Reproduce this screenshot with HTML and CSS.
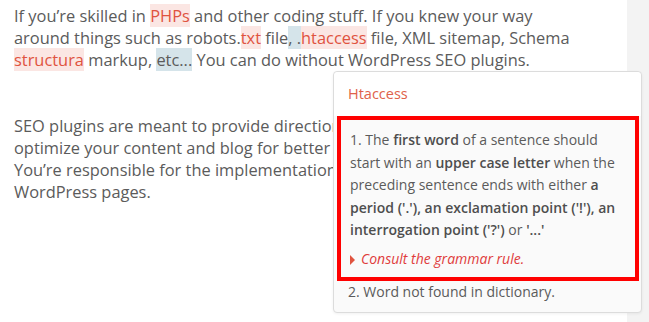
FILE: index.html
```html
<!DOCTYPE html>
<html lang="en">
<head>
  <meta charset="UTF-8" />
  <title>Grammar check</title>
  <link rel="stylesheet" href="styles.css">
</head>
<body>
  <div class="page">
    <p>If you’re skilled in <span class="err">PHPs</span> and other coding stuff. If you knew your way<br>
    around things such as robots.<span class="err">txt</span> file<span class="warn">, .</span><span class="err">htaccess</span> file, XML sitemap, Schema<br>
    <span class="err">structura</span> markup, <span class="warn">etc...</span> You can do without WordPress SEO plugins.</p>
    <p class="second">SEO plugins are meant to provide direction on how to<br>
    optimize your content and blog for better ranking.<br>
    You’re responsible for the implementation on your<br>
    WordPress pages.</p>
  </div>

  <div class="popup">
    <div class="popup-title">Htaccess</div>
    <div class="popup-body">
      <div class="rule selected">
        <p>1. The <b>first word</b> of a sentence should start with an <b>upper case letter</b> when the preceding sentence ends with either <b>a period ('.'), an exclamation point ('!'), an interrogation point ('?')</b> or <b>'...'</b></p>
        <div class="consult"><span class="arrow"></span>Consult the grammar rule.</div>
      </div>
      <div class="rule">
        <p>2. Word not found in dictionary.</p>
      </div>
    </div>
  </div>
</body>
</html>
```

FILE: styles.css
```css
body {
  margin: 0;
  background-color: #f3f3f3;
  font-family: 'Open Sans', sans-serif;
  color: #5b5b5b;
  height: 322px;
  overflow: hidden;
}

.page {
  width: 627px;
  height: 322px;
  box-sizing: border-box;
  background: white;
  padding: 5px 14px 0 14px;
  font-size: 16.4px;
  line-height: 22px;
  white-space: nowrap;
  overflow: hidden;
}

.page p {
  margin: 0;
}

.page p.second {
  margin-top: 44px;
}

.err {
  color: #e0533f;
  background-color: #fbe6e3;
}

.warn {
  background-color: #d5e4ea;
}

.popup {
  position: absolute;
  left: 333px;
  top: 71px;
  width: 309px;
  height: 242px;
  box-sizing: border-box;
  background: #fafafa;
  border: 1px solid #dcdcdc;
  border-radius: 4px;
  box-shadow: 0 1px 3px rgba(0,0,0,0.06);
  font-size: 14px;
  line-height: 22.5px;
}

.popup-title {
  background: white;
  color: #e0614a;
  padding: 11px 14px;
  font-size: 14.5px;
  line-height: 22px;
  border-radius: 4px 4px 0 0;
}

.rule {
  padding: 0 14px;
}

.rule p {
  margin: 0;
}

.rule b {
  font-weight: 600;
  color: #4e4e4e;
}

.selected {
  margin: 0 2px 0 3px;
  border: 4px solid #ff0000;
  padding: 9px 10px 7px 9px;
}

.consult {
  margin-top: 6px;
  color: #e03c3c;
  font-style: italic;
}

.arrow {
  display: inline-block;
  width: 0;
  height: 0;
  border-top: 5px solid transparent;
  border-bottom: 5px solid transparent;
  border-left: 5px solid #e0533f;
  margin-right: 6px;
  vertical-align: -1px;
}
```
